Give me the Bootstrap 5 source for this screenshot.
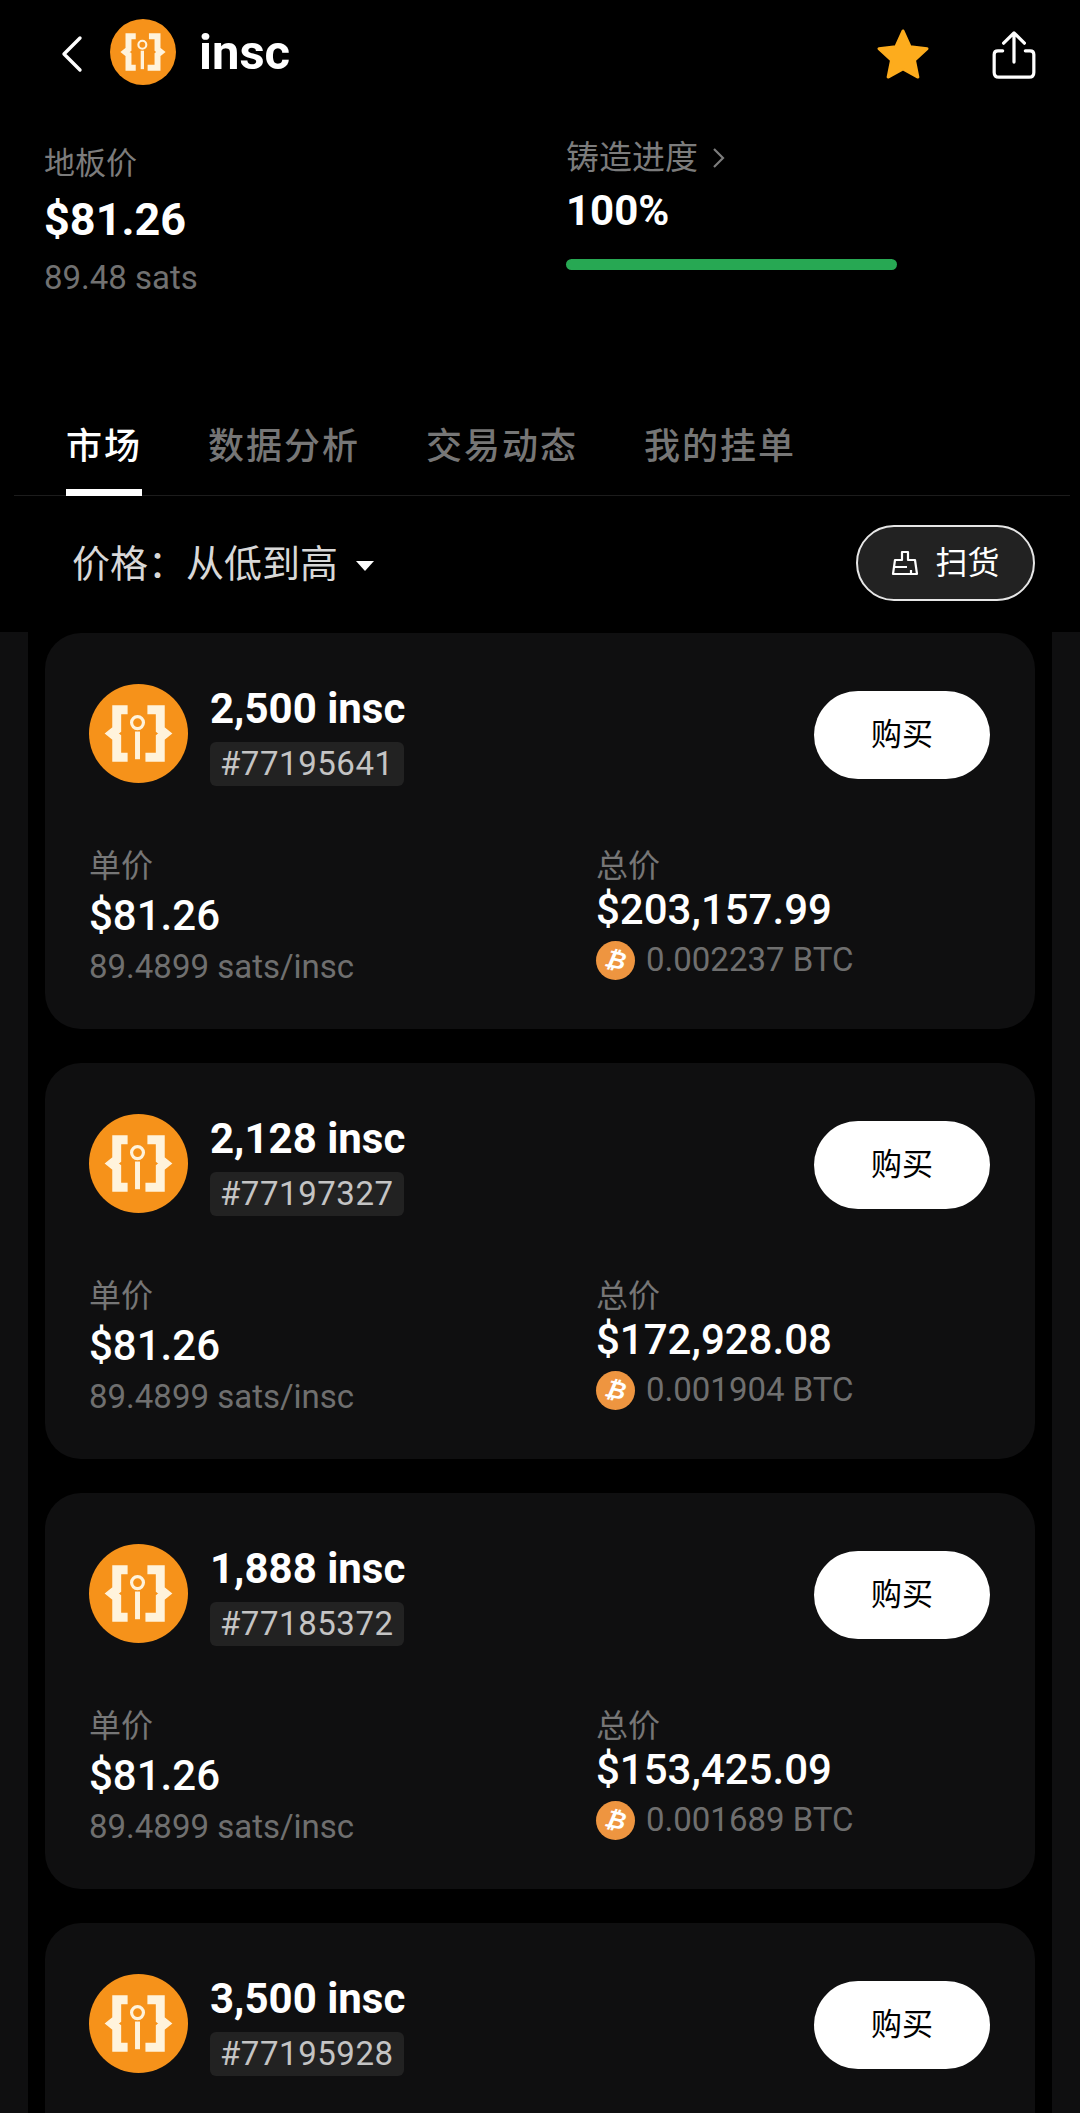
<!DOCTYPE html>
<html lang="zh">
<head>
<meta charset="utf-8">
<title>insc</title>
<link rel="stylesheet" href="https://cdn.jsdelivr.net/npm/bootstrap@5.3.0/dist/css/bootstrap.min.css">
<style>
html,body{background:#000;margin:0}
body{font-family:Roboto,"Noto Sans CJK SC",sans-serif;color:#fff;width:1080px;height:2113px;overflow:hidden}
.topbar{height:107px;padding:19px 43px 0 60px}
.backicon{width:24px;height:38px;margin-right:26px}
.tokenbig{width:66px;height:66px;margin-right:23px}
.brandname{font-size:49px;font-weight:700;line-height:64px;margin-top:2px}
.staricon{width:56px;height:52px;margin-right:60px;margin-top:9px}
.shareicon{width:46px;height:51px;margin-top:11px}
.statsrow{height:293px;padding-left:44px}
.statleft{width:522px;padding-top:37px}
.statright{padding-top:31px}
.stattitle{font-size:31px;line-height:40px;color:#7c7c7c}
.statright .stattitle{font-size:33px}
.statprice{font-size:45px;font-weight:700;line-height:52px;margin-top:10px}
.statsats{font-size:33px;line-height:40px;color:#717171;margin-top:12px}
.statpct{font-size:42px;font-weight:700;line-height:48px;margin-top:9px}
.chev{width:14px;height:24px;margin-left:14px;vertical-align:-1px}
.mintbar{width:331px;height:11px;margin-top:24px;background:#27a853;border-radius:6px}
.tabline{margin:0 10px 0 14px;height:96px;border-bottom:1px solid #1c1c1c;padding-left:52px;gap:66px;align-items:flex-start;flex-wrap:nowrap}
.tabitem{font-size:36px;line-height:58px;padding:18px 0 0;height:96px;color:#767676;font-weight:500;letter-spacing:2px;background:none}
.tabitem.tabon{color:#fff;border-bottom:7px solid #fff;margin-bottom:-1px}
.tabitem:hover,.tabitem:focus{color:#767676}
.tabitem.tabon:hover,.tabitem.tabon:focus{color:#fff}
.filterrow{height:136px;padding:0 45px 0 72px}
.sortlabel{font-size:38px;color:#d8d8d8;line-height:50px;display:flex;align-items:center}
.sortcaret{width:0;height:0;border-left:9px solid transparent;border-right:9px solid transparent;border-top:10px solid #fff;margin-left:18px;margin-top:4px}
.sweepbtn{width:179px;height:76px;margin-top:-2px;background:#222;border:2px solid #e6e6e6;color:#fff;font-size:32px;display:flex;align-items:center;justify-content:center;gap:16px;padding:0}
.sweepbtn:hover{background:#222;color:#fff;border-color:#e6e6e6}
.broom{width:28px;height:28px}
.listouter{background:#0f0f10;padding:0 28px;height:1481px;overflow:hidden}
.listinner{background:#000;padding:1px 17px 0 17px;gap:34px;min-height:100%}
.offercard{background:#0f0f10;border:0;border-radius:36px;height:396px;padding:51px 45px 0 44px;color:#fff;flex-shrink:0}
.tokensmall{width:99px;height:99px;margin-right:22px;flex-shrink:0}
.offertitle{font-size:42px;font-weight:700;line-height:48px;margin-bottom:9px;margin-top:1px}
.idchip{display:inline-block;background:#222;color:#c4c4c4;font-size:33px;line-height:44px;padding:0 10px;border-radius:6px;letter-spacing:.55px}
.buybtn{width:176px;height:88px;margin-top:7px;background:#fff;color:#000;font-size:31px;padding:0;border:0;display:flex;align-items:center;justify-content:center}
.buybtn:hover{background:#fff;color:#000}
.pricerow{margin-top:60px;--bs-gutter-x:0}
.colleft{width:508px;flex:none}
.colright{flex:1;width:auto;margin-left:-1px}
.pricelabel{font-size:32px;line-height:40px;color:#767676}
.priceval{font-size:42px;font-weight:500;line-height:52px}
.colleft .priceval{margin-top:4px}
.colright .priceval{margin-top:-2px}
.pricesub{font-size:33px;line-height:40px;color:#6f6f6f}
.colleft .pricesub{margin-top:5px}
.colright .pricesub{margin-top:4px;display:flex;align-items:center;gap:11px}
.btcdisc{width:39px;height:39px;border-radius:50%;background:#ee9540;color:#fff;display:inline-flex;align-items:center;justify-content:center;font:italic 700 24px "DejaVu Sans",sans-serif;flex-shrink:0}
.btcglyph{display:inline-block;transform:rotate(12deg)}
</style>
</head>
<body>
<svg width="0" height="0" class="d-block" aria-hidden="true">
  <defs>
    <symbol id="tokenlogo" viewBox="0 0 100 100">
      <circle cx="50" cy="50" r="50" fill="#f6921a"/>
      <path d="M39 26H28V46L23 50L28 54V74H39M59 26H72V46L77 50L72 54V74H57" fill="none" stroke="#fff3dc" stroke-width="9"/>
      <circle cx="49" cy="39" r="6" fill="#f6921a" stroke="#fff3dc" stroke-width="3.2"/>
      <path d="M49 48V76" stroke="#fff3dc" stroke-width="5"/>
    </symbol>
  </defs>
</svg>

<header>
  <div class="topbar d-flex align-items-start">
    <svg class="backicon mt-3" viewBox="0 0 24 38"><path d="M20 3L4 19L20 35" fill="none" stroke="#fff" stroke-width="3.4" stroke-linecap="round" stroke-linejoin="round"/></svg>
    <svg class="tokenbig"><use href="#tokenlogo"/></svg>
    <div class="brandname">insc</div>
    <div class="ms-auto d-flex">
      <svg class="staricon" viewBox="0 0 56 54"><path d="M28 3L35.5 19.5L53 21.5L40 33.5L43.5 51L28 42.5L12.5 51L16 33.5L3 21.5L20.5 19.5Z" fill="#fdac1d" stroke="#fdac1d" stroke-width="3" stroke-linejoin="round"/></svg>
      <svg class="shareicon" viewBox="0 0 48 54"><path d="M24 34V4M13 14L24 3L35 14M12 22H7Q3 22 3 26V45Q3 50 8 50H40Q45 50 45 45V26Q45 22 41 22H36" fill="none" stroke="#fff" stroke-width="3.4" stroke-linecap="round" stroke-linejoin="round"/></svg>
    </div>
  </div>

  <div class="statsrow d-flex align-items-start">
    <div class="statleft">
      <div class="stattitle">地板价</div>
      <div class="statprice">$81.26</div>
      <div class="statsats">89.48 sats</div>
    </div>
    <div class="statright">
      <div class="stattitle">铸造进度<svg class="chev" viewBox="0 0 14 24"><path d="M2 3L11 12L2 21" fill="none" stroke="#7c7c7c" stroke-width="2.2"/></svg></div>
      <div class="statpct">100%</div>
      <div class="mintbar"></div>
    </div>
  </div>

  <nav class="nav tabline">
    <a class="nav-link tabitem tabon" href="#">市场</a>
    <a class="nav-link tabitem" href="#">数据分析</a>
    <a class="nav-link tabitem" href="#">交易动态</a>
    <a class="nav-link tabitem" href="#">我的挂单</a>
  </nav>

  <div class="filterrow d-flex align-items-center justify-content-between">
    <div class="sortlabel">价格：从低到高<span class="sortcaret"></span></div>
    <button class="btn rounded-pill sweepbtn" type="button">
      <svg class="broom" viewBox="0 0 28 28"><path d="M11 3H17V11H24L26 25H2L4 11H11ZM3 18H16M20 25V21" fill="none" stroke="#fff" stroke-width="2.2" stroke-linejoin="round"/></svg>
      <span>扫货</span>
    </button>
  </div>
</header>

<main class="listouter">
  <div class="listinner d-flex flex-column">

    <div class="card offercard">
      <div class="d-flex align-items-start">
        <svg class="tokensmall"><use href="#tokenlogo"/></svg>
        <div>
          <div class="offertitle">2,500 insc</div>
          <span class="idchip">#77195641</span>
        </div>
        <button class="btn rounded-pill buybtn ms-auto" type="button">购买</button>
      </div>
      <div class="row pricerow">
        <div class="col colleft">
          <div class="pricelabel">单价</div>
          <div class="priceval">$81.26</div>
          <div class="pricesub">89.4899 sats/insc</div>
        </div>
        <div class="col colright">
          <div class="pricelabel">总价</div>
          <div class="priceval">$203,157.99</div>
          <div class="pricesub"><span class="btcdisc"><span class="btcglyph">₿</span></span>0.002237 BTC</div>
        </div>
      </div>
    </div>

    <div class="card offercard">
      <div class="d-flex align-items-start">
        <svg class="tokensmall"><use href="#tokenlogo"/></svg>
        <div>
          <div class="offertitle">2,128 insc</div>
          <span class="idchip">#77197327</span>
        </div>
        <button class="btn rounded-pill buybtn ms-auto" type="button">购买</button>
      </div>
      <div class="row pricerow">
        <div class="col colleft">
          <div class="pricelabel">单价</div>
          <div class="priceval">$81.26</div>
          <div class="pricesub">89.4899 sats/insc</div>
        </div>
        <div class="col colright">
          <div class="pricelabel">总价</div>
          <div class="priceval">$172,928.08</div>
          <div class="pricesub"><span class="btcdisc"><span class="btcglyph">₿</span></span>0.001904 BTC</div>
        </div>
      </div>
    </div>

    <div class="card offercard">
      <div class="d-flex align-items-start">
        <svg class="tokensmall"><use href="#tokenlogo"/></svg>
        <div>
          <div class="offertitle">1,888 insc</div>
          <span class="idchip">#77185372</span>
        </div>
        <button class="btn rounded-pill buybtn ms-auto" type="button">购买</button>
      </div>
      <div class="row pricerow">
        <div class="col colleft">
          <div class="pricelabel">单价</div>
          <div class="priceval">$81.26</div>
          <div class="pricesub">89.4899 sats/insc</div>
        </div>
        <div class="col colright">
          <div class="pricelabel">总价</div>
          <div class="priceval">$153,425.09</div>
          <div class="pricesub"><span class="btcdisc"><span class="btcglyph">₿</span></span>0.001689 BTC</div>
        </div>
      </div>
    </div>

    <div class="card offercard">
      <div class="d-flex align-items-start">
        <svg class="tokensmall"><use href="#tokenlogo"/></svg>
        <div>
          <div class="offertitle">3,500 insc</div>
          <span class="idchip">#77195928</span>
        </div>
        <button class="btn rounded-pill buybtn ms-auto" type="button">购买</button>
      </div>
    </div>

  </div>
</main>
</body>
</html>
